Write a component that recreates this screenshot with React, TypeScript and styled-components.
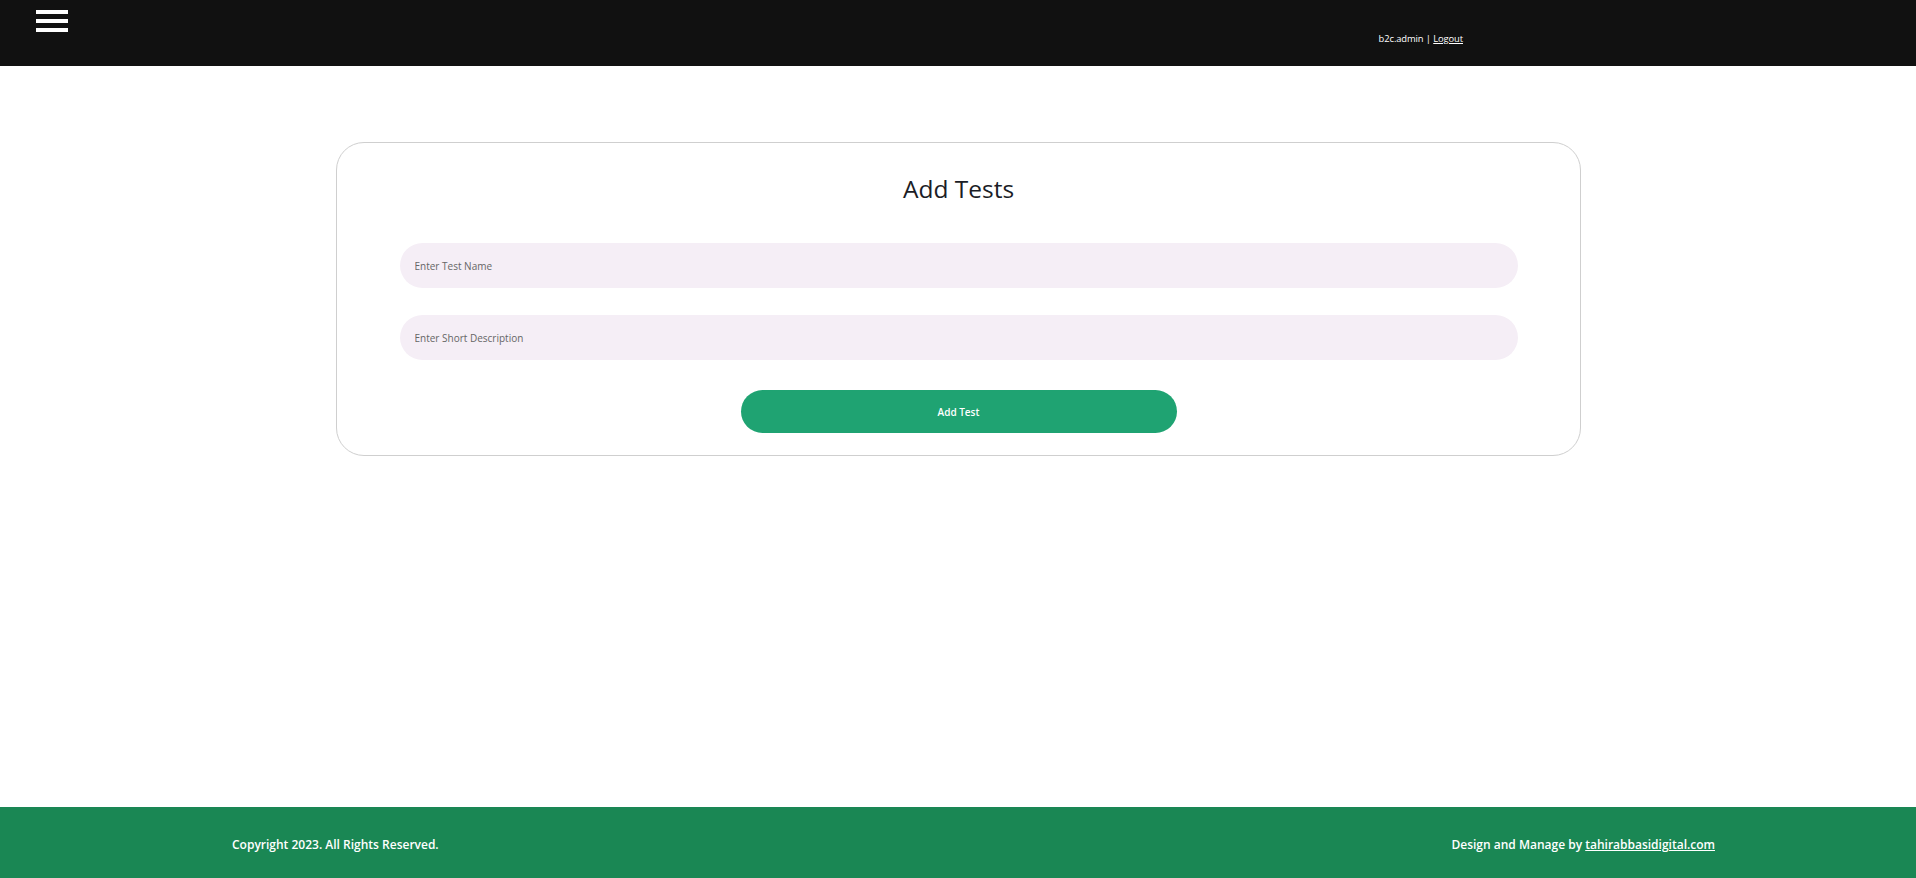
import React from 'react';
import styled, { createGlobalStyle } from 'styled-components';

const GlobalStyle = createGlobalStyle`
  * {
    box-sizing: border-box;
  }
  body {
    margin: 0;
    font-family: 'Open Sans', 'Noto Sans', sans-serif;
    background: #fff;
  }
`;

const App: React.FC = () => {
  return (
    <Page>
      <GlobalStyle />
      <Header>
        <Burger aria-label="menu">
          <span />
          <span />
          <span />
        </Burger>
        <UserBox>
          b2c.admin | <a href="#">Logout</a>
        </UserBox>
      </Header>

      <Main>
        <Card>
          <Title>Add Tests</Title>
          <Field placeholder="Enter Test Name" />
          <Field placeholder="Enter Short Description" />
          <SubmitBtn type="button">Add Test</SubmitBtn>
        </Card>
      </Main>

      <Footer>
        <span>Copyright 2023. All Rights Reserved.</span>
        <span>
          Design and Manage by <a href="#">tahirabbasidigital.com</a>
        </span>
      </Footer>
    </Page>
  );
};

const Page = styled.div`
  min-height: 100vh;
  display: flex;
  flex-direction: column;
`;

const Header = styled.header`
  height: 66px;
  background: #111111;
  display: flex;
  align-items: flex-start;
  justify-content: space-between;
  padding: 10px 453px 0 36px;
`;

const Burger = styled.div`
  display: flex;
  flex-direction: column;
  gap: 5px;
  cursor: pointer;

  > span {
    display: block;
    width: 32px;
    height: 4px;
    background: #fff;
  }
`;

const UserBox = styled.div`
  margin-top: 22px;
  color: #fff;
  font-size: 9.4px;
  letter-spacing: -0.1px;
  line-height: 14px;

  a {
    color: #fff;
  }
`;

const Main = styled.main`
  flex: 1;
  display: flex;
  justify-content: center;
  align-items: flex-start;
  padding-top: 76px;
`;

const Card = styled.div`
  width: 1245px;
  border: 1px solid #cfcfcf;
  border-radius: 28px;
  padding: 30px 62px 22px 63px;
  display: flex;
  flex-direction: column;
  align-items: center;
`;

const Title = styled.h2`
  margin: 0 0 38px;
  font-size: 24.5px;
  line-height: 32px;
  font-weight: 400;
  color: #1b1d26;
`;

const Field = styled.input`
  width: 100%;
  height: 45px;
  border: none;
  outline: none;
  border-radius: 23px;
  background: #f5eef6;
  padding: 0 15px;
  font-family: inherit;
  font-size: 10px;
  color: #333;
  margin-bottom: 27px;

  &::placeholder {
    color: #666;
  }
`;

const SubmitBtn = styled.button`
  margin-top: 3px;
  width: 436px;
  height: 43px;
  border: none;
  border-radius: 22px;
  background: #1fa372;
  color: #fff;
  font-family: inherit;
  font-size: 10px;
  font-weight: 600;
  cursor: pointer;
`;

const Footer = styled.footer`
  height: 71px;
  background: #1a8754;
  color: #fff;
  display: flex;
  align-items: center;
  justify-content: space-between;
  padding: 3px 201px 0 232px;
  font-size: 12px;
  font-weight: 600;

  a {
    color: #fff;
  }
`;

export default App;
